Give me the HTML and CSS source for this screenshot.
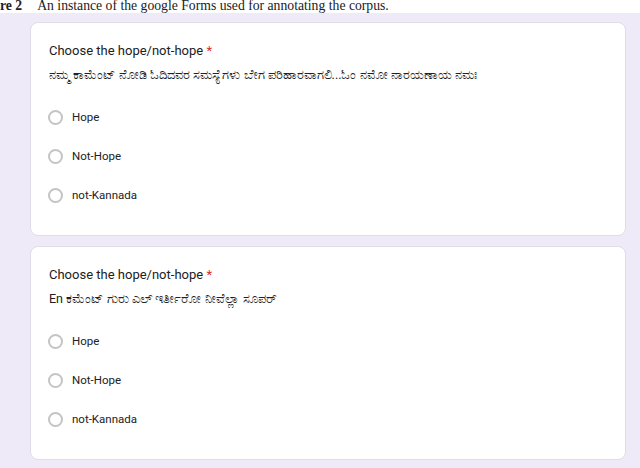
FILE: index.html
```html
<!DOCTYPE html>
<html lang="en">
    <head>
        <meta charset="utf-8">
        <title>Figure 2</title>
        <link rel="stylesheet" href="styles.css">
    </head>
    <body>
        <div class="caption"><b>re 2</b>An instance of the google Forms used for annotating the corpus.</div>

        <div class="form">
            <div class="card">
                <div class="title">Choose the hope/not-hope <span class="star">*</span></div>
                <div class="comment">ನಮ್ಮ ಕಾಮೆಂಟ್ ನೋಡಿ ಓದಿದವರ ಸಮಸ್ಯೆಗಳು ಬೇಗ ಪರಿಹಾರವಾಗಲಿ...ಓಂ ನಮೋ ನಾರಯಣಾಯ ನಮಃ</div>
                <div class="options">
                    <div class="option"><span class="radio"></span>Hope</div>
                    <div class="option"><span class="radio"></span>Not-Hope</div>
                    <div class="option"><span class="radio"></span>not-Kannada</div>
                </div>
            </div>

            <div class="card">
                <div class="title">Choose the hope/not-hope <span class="star">*</span></div>
                <div class="comment">En ಕಮೆಂಟ್ ಗುರು ಎಲ್ ಇರ್ತೀರೋ ನೀವೆಲ್ಲಾ ಸೂಪರ್</div>
                <div class="options">
                    <div class="option"><span class="radio"></span>Hope</div>
                    <div class="option"><span class="radio"></span>Not-Hope</div>
                    <div class="option"><span class="radio"></span>not-Kannada</div>
                </div>
            </div>
        </div>
    </body>
</html>
```

FILE: styles.css
```css
body {
    margin: 0;
    background: #eeeaf8;
    font-family: Roboto, "Noto Sans", sans-serif;
    color: #202124;
}

/* the figure caption, sitting right at the top edge like in the paper */
.caption {
    height: 13px;
    line-height: 12px;
    background: #fff;
    font-family: "Liberation Serif", "DejaVu Serif", serif;
    font-size: 13.7px;
    white-space: nowrap;
}

.caption b {
    margin-right: 15px;
}

.form {
    padding: 9px 14px 8px 30px;
    display: flex;
    flex-direction: column;
    gap: 10px;
}

.card {
    background: #fff;
    border: 1px solid #e0dce8;
    border-radius: 8px;
    padding: 18px 18px 30px;
}

.title {
    font-size: 13px;
    line-height: 20px;
}

.star {
    color: #d93025;
}

.comment {
    margin-top: 6px;
    font-size: 12.5px;
    line-height: 16px;
}

.options {
    margin-top: 24px;
    display: flex;
    flex-direction: column;
    gap: 19px;
}

.option {
    display: flex;
    align-items: center;
    gap: 9px;
    font-size: 11.5px;
    line-height: 20px;
}

.radio {
    width: 11px;
    height: 11px;
    margin-left: -1px;
    border: 2px solid #c4c4c4;
    border-radius: 50%;
}
```
